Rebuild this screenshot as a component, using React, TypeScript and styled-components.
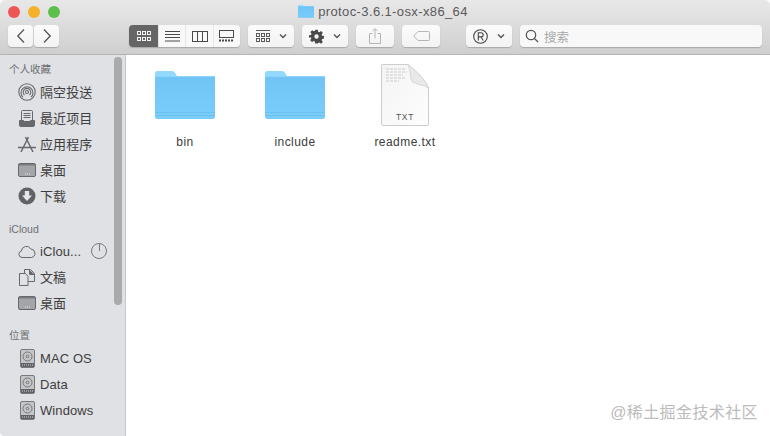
import React from 'react';
import styled, { createGlobalStyle } from 'styled-components';

const GlobalStyle = createGlobalStyle`
	html, body {
		margin: 0;
		padding: 0;
		background: #fff;
	}
	body {
		font-family: 'Liberation Sans', 'Noto Sans CJK SC', sans-serif;
		color: #3a3a3a;
	}
`;

const Window = styled.div`
	position: relative;
	width: 770px;
	height: 436px;
	overflow: hidden;
	border-radius: 5px 5px 4px 4px;
	display: flex;
	flex-direction: column;
`;

const Header = styled.div`
	height: 54px;
	flex: none;
	background: linear-gradient(#e8e8e8, #cfcfcf);
	border-bottom: 1px solid #b4b4b4;
	display: flex;
	flex-direction: column;
`;

const TitleRow = styled.div`
	height: 23px;
	padding: 0 8px;
	display: flex;
	align-items: center;
	position: relative;
`;

const Lights = styled.div`
	display: flex;
	gap: 8px;
`;

const Light = styled.span<{ $color: string }>`
	width: 12px;
	height: 12px;
	border-radius: 50%;
	background: ${(p) => p.$color};
`;

const Title = styled.div`
	flex: 1;
	display: flex;
	justify-content: center;
	align-items: center;
	gap: 4px;
	padding-right: 56px;
	font-size: 13px;
	letter-spacing: 0.38px;
	color: #5a5a5a;
`;

const Toolbar = styled.div`
	height: 22px;
	margin-top: 2px;
	padding: 0 8px;
	display: flex;
	align-items: stretch;
`;

const Group = styled.div<{ $left?: number }>`
	display: flex;
	gap: 1px;
	margin-left: ${(p) => p.$left ?? 0}px;
`;

const Btn = styled.div<{ $w: number; $faded?: boolean }>`
	width: ${(p) => p.$w}px;
	background: linear-gradient(#fbfbfb, #f3f3f3);
	border-radius: 4px;
	box-shadow: 0 1px 1px rgba(0, 0, 0, 0.2);
	display: flex;
	align-items: center;
	justify-content: center;
	gap: 9px;
	color: #4d4d4d;
	& > svg {
		opacity: ${(p) => (p.$faded ? 0.4 : 1)};
	}
`;

const Segmented = styled.div`
	width: 111px;
	display: flex;
	border-radius: 4px;
	overflow: hidden;
	margin-left: 70px;
	box-shadow: 0 1px 1px rgba(0, 0, 0, 0.2);
`;

const Segment = styled.div<{ $w: number; $dark?: boolean }>`
	width: ${(p) => p.$w}px;
	background: ${(p) => (p.$dark ? '#656565' : '#f8f8f8')};
	color: ${(p) => (p.$dark ? '#f4f4f4' : '#4a4a4a')};
	border-left: ${(p) => (p.$dark ? 'none' : '1px solid #e6e6e6')};
	display: flex;
	align-items: center;
	justify-content: center;
`;

const Search = styled.div`
	width: 242px;
	margin-left: 8px;
	background: #f8f8f8;
	border-radius: 4px;
	box-shadow: 0 1px 1px rgba(0, 0, 0, 0.2);
	display: flex;
	align-items: center;
	gap: 5px;
	padding-left: 5px;
	font-size: 12.5px;
	color: #a8a8a8;
	box-sizing: border-box;
`;

const Body = styled.div`
	flex: 1;
	display: flex;
	min-height: 0;
`;

const Sidebar = styled.div`
	width: 125px;
	flex: none;
	background: #dfe1e4;
	border-right: 1px solid #c6c6c6;
	display: flex;
`;

const SideList = styled.div`
	flex: 1;
	min-width: 0;
	padding-top: 6px;
`;

const Thumb = styled.div`
	width: 8px;
	height: 248px;
	margin: 2px 3px 0 0;
	border-radius: 4px;
	background: #a9aaac;
`;

const SectionTitle = styled.div<{ $top?: number }>`
	height: 16px;
	line-height: 16px;
	margin-top: ${(p) => p.$top ?? 0}px;
	padding-left: 9px;
	font-size: 10.5px;
	color: #6d6f72;
`;

const Section = styled.div<{ $top?: number }>`
	margin-top: ${(p) => p.$top ?? 2}px;
`;

const Row = styled.div`
	height: 26px;
	display: flex;
	align-items: center;
	padding-left: 18px;
	gap: 4px;
	font-size: 13px;
	color: #3e3e40;
	letter-spacing: 0.1px;
`;

const RowIcon = styled.span`
	width: 18px;
	height: 20px;
	display: flex;
	align-items: center;
	justify-content: center;
	color: #66686b;
	flex: none;
`;

const RowLabel = styled.span<{ $cjk?: boolean }>`
	flex: 1;
	white-space: nowrap;
	margin-top: ${(p) => (p.$cjk ? -2 : 0)}px;
`;

const Progress = styled.span`
	width: 16px;
	height: 16px;
	margin-right: 7px;
	border: 1px solid #77797c;
	border-radius: 50%;
	box-sizing: border-box;
	position: relative;
	&::after {
		content: '';
		position: absolute;
		left: 6.5px;
		top: 0;
		width: 1px;
		height: 7px;
		background: #77797c;
	}
`;

const Content = styled.div`
	flex: 1;
	background: #fff;
	display: grid;
	grid-template-columns: repeat(3, 110px);
	grid-auto-rows: 100px;
	padding: 8px 0 0 4px;
`;

const Item = styled.div`
	display: flex;
	flex-direction: column;
	align-items: center;
`;

const Thumbnail = styled.div<{ $lift?: number }>`
	height: 63px;
	box-sizing: border-box;
	padding-bottom: ${(p) => p.$lift ?? 0}px;
	display: flex;
	align-items: flex-end;
	justify-content: center;
`;

const FileName = styled.div`
	margin-top: 9px;
	font-size: 12px;
	letter-spacing: 0.45px;
	color: #3c3c3c;
`;

const Watermark = styled.div`
	position: absolute;
	right: 12px;
	bottom: 13px;
	font-size: 16px;
	letter-spacing: 0.4px;
	line-height: 20px;
	color: #bcbcbc;
`;

const Chevron = ({ left }: { left?: boolean }) => (
	<svg width="10" height="16" viewBox="0 0 10 16" fill="none" stroke="#555" strokeWidth="1.3">
		<path d={left ? 'M8 1.500 1.800 8 8 14.500' : 'M2 1.500 8.200 8 2 14.500'} />
	</svg>
);

const Caret = () => (
	<svg width="8" height="6" viewBox="0 0 8 6" fill="none" stroke="#555" strokeWidth="1.4">
		<path d="M1 1.500 4 4.500 7 1.500" />
	</svg>
);

const GridIcon = () => (
	<svg width="14" height="11" viewBox="0 0 14 11" fill="none" stroke="currentColor">
		{[0, 5, 10].map((x) =>
			[0, 6].map((y) => <rect key={`${x}${y}`} x={x + 0.5} y={y + 0.5} width="3" height="3" />),
		)}
	</svg>
);

const ListIcon = () => (
	<svg width="15" height="11" viewBox="0 0 15 11" stroke="currentColor">
		<path d="M0 .5h15M0 3.500h15M0 6.500h15M0 10h15" />
	</svg>
);

const ColumnsIcon = () => (
	<svg width="16" height="11" viewBox="0 0 16 11" fill="none" stroke="currentColor">
		<rect x=".5" y=".5" width="15" height="10" />
		<path d="M5.500 0v11M10.500 0v11" />
	</svg>
);

const GalleryIcon = () => (
	<svg width="15" height="12" viewBox="0 0 15 12" fill="none" stroke="currentColor">
		<rect x=".5" y=".5" width="14" height="7" />
		<path d="M0 10.500h15" strokeDasharray="2 1" strokeWidth="2" />
	</svg>
);

const ArrangeIcon = () => (
	<svg width="14" height="13" viewBox="0 0 14 13" fill="none" stroke="#5a5a5a">
		<path d="M0 .5h14" />
		{[0, 5, 10].map((x) =>
			[3, 8].map((y) => <rect key={`${x}${y}`} x={x + 0.5} y={y + 0.5} width="3" height="3" />),
		)}
	</svg>
);

const GearIcon = () => (
	<svg width="15" height="15" viewBox="0 0 24 24" fill="#4a4a4a">
		<path
			fillRule="evenodd"
			d="M10 1h4l.6 3.200 2 .8L19.300 3.200l2.800 2.800-1.800 2.700.8 2 3.200.6v4l-3.200.6-.8 2 1.800 2.700-2.800 2.800-2.700-1.800-2 .8L14 23h-4l-.6-3.200-2-.8-2.700 1.800-2.800-2.800 1.800-2.700-.8-2L0 14v-4l3.200-.6.8-2L2.200 4.700 5 1.900l2.700 1.800 2-.8zM12 8.500a3.500 3.500 0 1 0 0 7 3.500 3.500 0 0 0 0-7z"
		/>
	</svg>
);

const ShareIcon = () => (
	<svg width="12" height="16" viewBox="0 0 12 16" fill="none" stroke="#555">
		<path d="M3.500 5.500H.5v10h11v-10h-3M6 10.500V.8M3.500 3 6 .8 8.500 3" />
	</svg>
);

const TagIcon = () => (
	<svg width="17" height="10" viewBox="0 0 17 10" fill="none" stroke="#555">
		<path d="M5 .5h10.500a1 1 0 0 1 1 1v7a1 1 0 0 1-1 1H5L.8 5z" />
	</svg>
);

const RegisteredIcon = () => (
	<svg width="15" height="15" viewBox="0 0 15 15" fill="none" stroke="#444" strokeWidth="1.1">
		<circle cx="7.500" cy="7.500" r="6.800" />
		<path d="M5.300 11.500V3.800h2.800a2 2 0 0 1 0 4.100H5.300M8 8l2.300 3.500" />
	</svg>
);

const SearchIcon = () => (
	<svg width="14" height="14" viewBox="0 0 14 14" fill="none" stroke="#555" strokeWidth="1.2">
		<circle cx="6" cy="6" r="4.700" />
		<path d="M9.500 9.500 13 13" />
	</svg>
);

const AirDropIcon = () => (
	<svg width="18" height="18" viewBox="0 0 18 18" fill="none" stroke="currentColor" strokeWidth="1.100">
		<circle cx="9" cy="9" r="8.200" />
		<path d="M5 14.200a6 6 0 1 1 8 0M6.500 12a3.800 3.800 0 1 1 5 0" />
		<circle cx="9" cy="9" r="1.500" />
	</svg>
);

const RecentsIcon = () => (
	<svg width="16" height="17" viewBox="0 0 16 17" fill="none" stroke="currentColor">
		<rect x="2.500" y=".5" width="11" height="11" rx="1" />
		<path d="M4.500 3.500h7M4.500 5.500h7M4.500 7.500h7" />
		<path d="M.5 10.500h4l1 2h5l1-2h4v4.500a1.500 1.500 0 0 1-1.500 1.500H2a1.500 1.500 0 0 1-1.500-1.500z" fill="currentColor" />
	</svg>
);

const AppsIcon = () => (
	<svg width="18" height="17" viewBox="0 0 18 17" fill="none" stroke="currentColor" strokeWidth="1.500">
		<path d="M7.500 1 15 16M10.500 1 3 16M0 11.500h18" />
	</svg>
);

const DesktopIcon = () => (
	<svg width="18" height="14" viewBox="0 0 18 14">
		<rect x=".5" y=".5" width="17" height="13" rx="1.500" fill="#a3a5a8" stroke="#66686b" />
		<path d="M1 1h16v1.500H1z" fill="#797b7e" />
		<path d="M7 11h1M9 11h1M11 11h1" stroke="#e5e5e5" />
	</svg>
);

const DownloadIcon = () => (
	<svg width="18" height="18" viewBox="0 0 18 18">
		<circle cx="9" cy="9" r="8.500" fill="#606265" />
		<path d="M6.800 4h4.400v4.500h2.800L9 14 4 8.500h2.800z" fill="#e5e6e8" />
	</svg>
);

const CloudIcon = () => (
	<svg width="18" height="13" viewBox="0 0 18 13" fill="none" stroke="currentColor">
		<path d="M4 12.500a3.300 3.300 0 0 1-.6-6.500A5 5 0 0 1 12.800 4a4.300 4.300 0 0 1 .7 8.500z" />
	</svg>
);

const DocumentsIcon = () => (
	<svg width="16" height="17" viewBox="0 0 16 17" fill="none" stroke="currentColor">
		<path d="M.5 4.500h6l2.500 3v9H.5z" />
		<path d="M5.500 4V.5h6l4 4v8H9" />
		<path d="M10.500 1v4.500h5" fill="currentColor" />
	</svg>
);

const DiskIcon = () => (
	<svg width="15" height="19" viewBox="0 0 15 19">
		<rect x=".5" y=".5" width="14" height="18" rx="1.500" fill="#c4c5c7" stroke="#77797c" />
		<circle cx="7.500" cy="7.500" r="4.500" fill="none" stroke="#77797c" />
		<circle cx="7.500" cy="7.500" r="1.300" fill="none" stroke="#77797c" />
		<path d="M1 14h13v4H1z" fill="#606265" />
		<path d="M2 16h11" stroke="#d5d5d5" strokeDasharray="1 1" />
	</svg>
);

const FolderIcon = ({ size = 60 }: { size?: number }) => (
	<svg width={size} height={(size * 48) / 60} viewBox="0 0 60 48">
		<defs>
			<linearGradient id="fold" x1="0" y1="0" x2="0" y2="1">
				<stop offset="0" stopColor="#70c4f5" />
				<stop offset="1" stopColor="#7acefc" />
			</linearGradient>
		</defs>
		<path d="M2.500 0h14c2 0 3 .8 4 2.500L22 5h36a2 2 0 0 1 2 2v10H0V2.500A2.500 2.500 0 0 1 2.500 0z" fill="#93d8fd" />
		<rect y="5" width="60" height="43" rx="2.500" fill="url(#fold)" />
		<path d="M0 41.500h60M0 44.500h60" stroke="#62b5e6" strokeOpacity=".5" />
		<rect y="5" width="60" height="1" fill="#8dd5fc" />
	</svg>
);

const TextFileIcon = () => (
	<svg width="48" height="62" viewBox="0 0 48 62" style={{ fontFamily: 'Liberation Sans, sans-serif' }}>
		<defs>
			<linearGradient id="page" x1="0" y1="0" x2="1" y2="1">
				<stop offset="0" stopColor="#f4f4f4" />
				<stop offset="1" stopColor="#fdfdfd" />
			</linearGradient>
		</defs>
		<path d="M1 .5h26C35 7 44 15 47.500 24v36a1.500 1.500 0 0 1-1.500 1.500H2A1.500 1.500 0 0 1 .5 60V1z" fill="url(#page)" stroke="#cdcdcd" />
		<path d="M27 .5c3 7 2 13 4 17 4 3 11 3 16.500 6.500C43 14 35 7 27 .5z" fill="#e9e9e9" stroke="#d6d6d6" />
		<path d="M5 5h19M5 8h21M5 11h17M5 14h20M5 17h13" stroke="#cbcbcb" strokeWidth="1.100" strokeDasharray="3 1" />
		<text x="24" y="56" textAnchor="middle" fontSize="8.500" letterSpacing=".7" fill="#555">
			TXT
		</text>
	</svg>
);

const favourites = [
	{ label: '隔空投送', icon: <AirDropIcon /> },
	{ label: '最近项目', icon: <RecentsIcon /> },
	{ label: '应用程序', icon: <AppsIcon /> },
	{ label: '桌面', icon: <DesktopIcon /> },
	{ label: '下载', icon: <DownloadIcon /> },
];

const disks = ['MAC OS', 'Data', 'Windows'];

function App() {
	return (
		<Window>
			<GlobalStyle />
			<Header>
				<TitleRow>
					<Lights>
						<Light $color="#ee5555" />
						<Light $color="#f6b02a" />
						<Light $color="#5cc04b" />
					</Lights>
					<Title>
						<FolderIcon size={16} />
						protoc-3.6.1-osx-x86_64
					</Title>
				</TitleRow>
				<Toolbar>
					<Group>
						<Btn $w={25}>
							<Chevron left />
						</Btn>
						<Btn $w={25}>
							<Chevron />
						</Btn>
					</Group>
					<Segmented>
						<Segment $w={30} $dark>
							<GridIcon />
						</Segment>
						<Segment $w={27}>
							<ListIcon />
						</Segment>
						<Segment $w={27}>
							<ColumnsIcon />
						</Segment>
						<Segment $w={27}>
							<GalleryIcon />
						</Segment>
					</Segmented>
					<Group $left={8}>
						<Btn $w={46}>
							<ArrangeIcon />
							<Caret />
						</Btn>
					</Group>
					<Group $left={8}>
						<Btn $w={46}>
							<GearIcon />
							<Caret />
						</Btn>
					</Group>
					<Group $left={8}>
						<Btn $w={38} $faded>
							<ShareIcon />
						</Btn>
					</Group>
					<Group $left={8}>
						<Btn $w={38} $faded>
							<TagIcon />
						</Btn>
					</Group>
					<Group $left={26}>
						<Btn $w={46}>
							<RegisteredIcon />
							<Caret />
						</Btn>
					</Group>
					<Search>
						<SearchIcon />
						搜索
					</Search>
				</Toolbar>
			</Header>
			<Body>
				<Sidebar>
					<SideList>
						<SectionTitle>个人收藏</SectionTitle>
						<Section>
							{favourites.map((f) => (
								<Row key={f.label}>
									<RowIcon>{f.icon}</RowIcon>
									<RowLabel $cjk>{f.label}</RowLabel>
								</Row>
							))}
						</Section>
						<SectionTitle $top={12}>iCloud</SectionTitle>
						<Section $top={1}>
							<Row>
								<RowIcon>
									<CloudIcon />
								</RowIcon>
								<RowLabel>iClou...</RowLabel>
								<Progress />
							</Row>
							<Row>
								<RowIcon>
									<DocumentsIcon />
								</RowIcon>
								<RowLabel $cjk>文稿</RowLabel>
							</Row>
							<Row>
								<RowIcon>
									<DesktopIcon />
								</RowIcon>
								<RowLabel $cjk>桌面</RowLabel>
							</Row>
						</Section>
						<SectionTitle $top={11}>位置</SectionTitle>
						<Section>
							{disks.map((d) => (
								<Row key={d}>
									<RowIcon>
										<DiskIcon />
									</RowIcon>
									<RowLabel>{d}</RowLabel>
								</Row>
							))}
						</Section>
					</SideList>
					<Thumb />
				</Sidebar>
				<Content>
					<Item>
						<Thumbnail $lift={7}>
							<FolderIcon />
						</Thumbnail>
						<FileName>bin</FileName>
					</Item>
					<Item>
						<Thumbnail $lift={7}>
							<FolderIcon />
						</Thumbnail>
						<FileName>include</FileName>
					</Item>
					<Item>
						<Thumbnail>
							<TextFileIcon />
						</Thumbnail>
						<FileName>readme.txt</FileName>
					</Item>
				</Content>
			</Body>
			<Watermark>@稀土掘金技术社区</Watermark>
		</Window>
	);
}

export default App;
